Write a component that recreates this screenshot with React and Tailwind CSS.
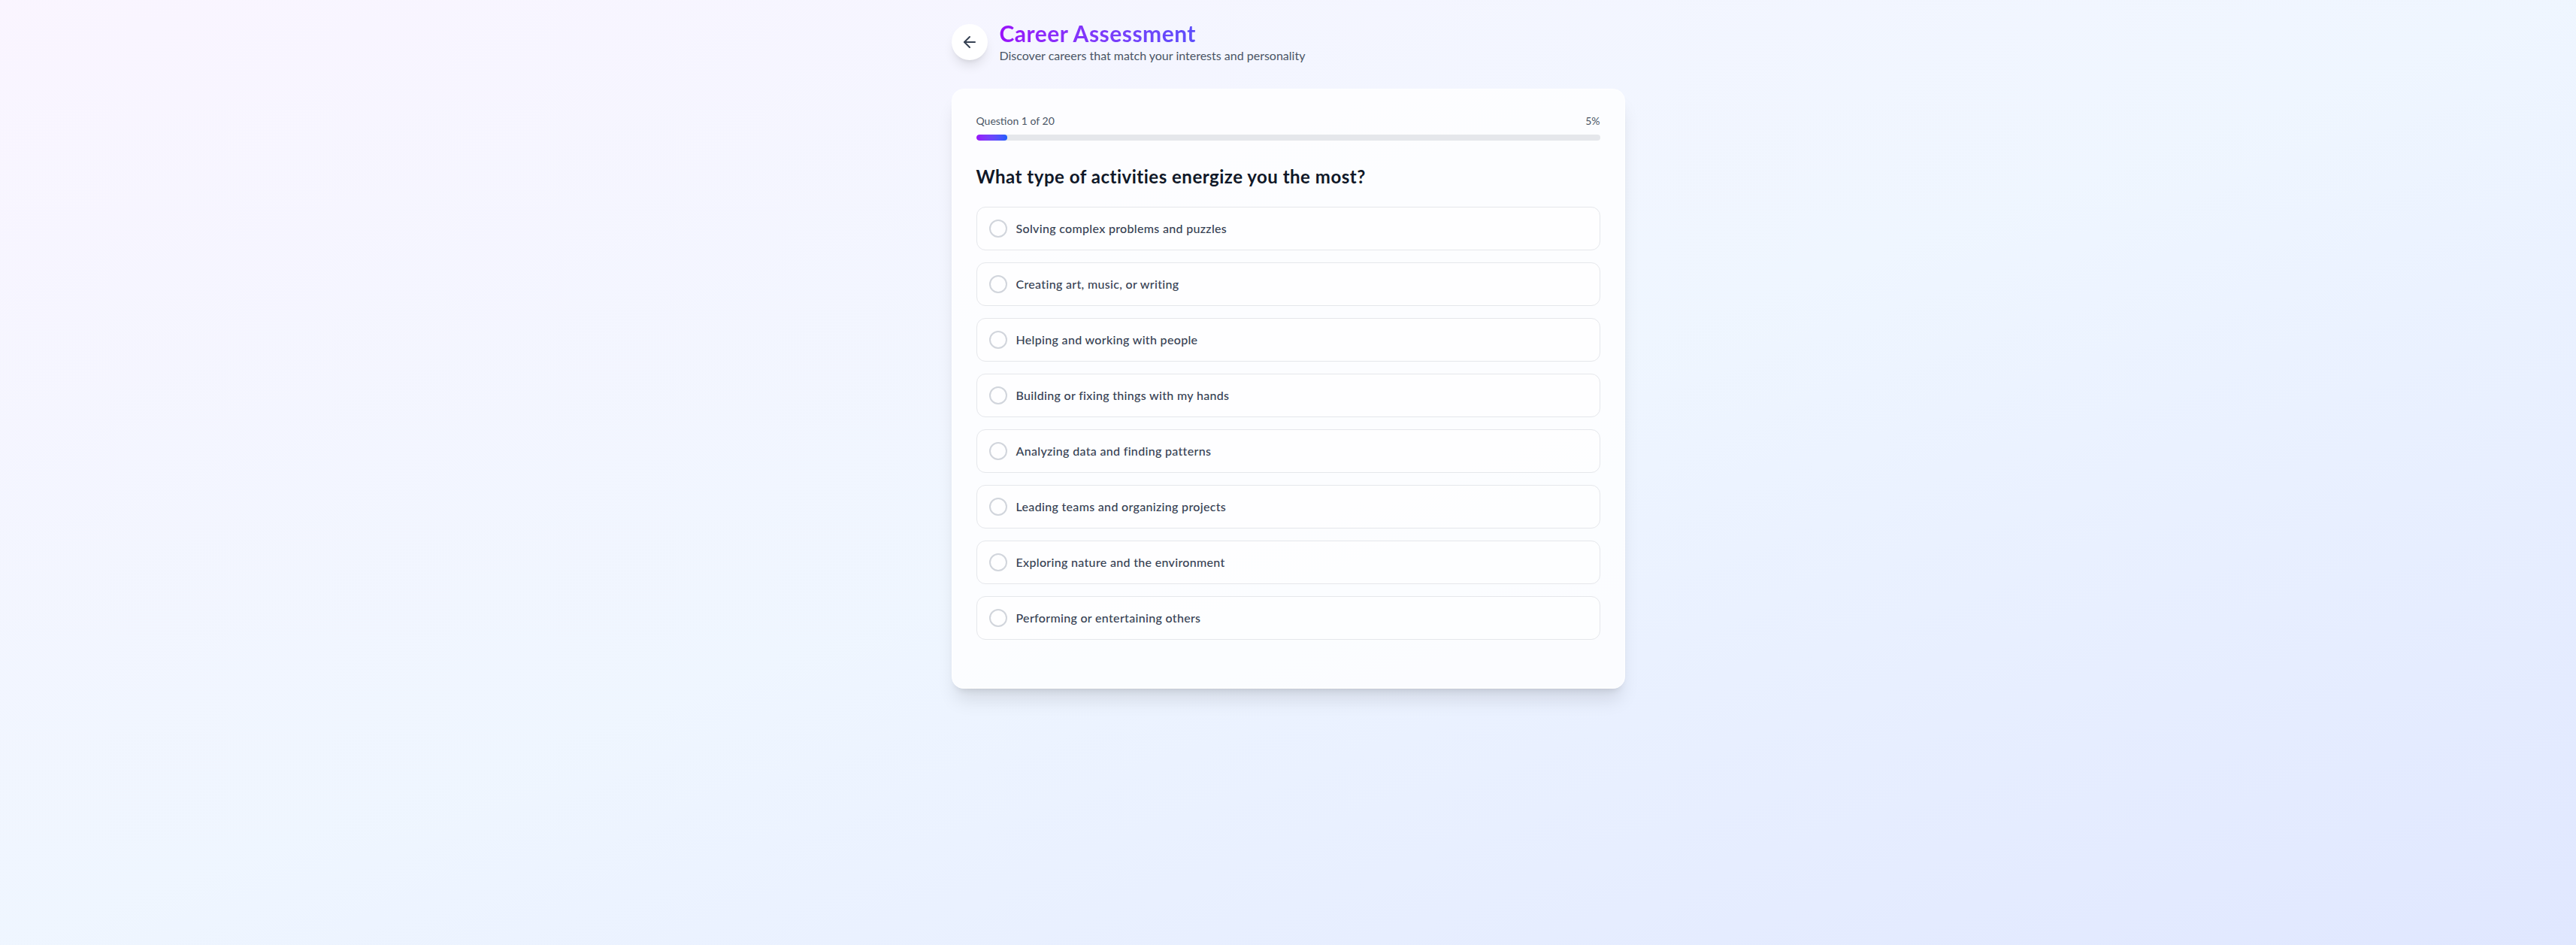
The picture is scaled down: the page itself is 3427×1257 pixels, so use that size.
import React from "react";
import { ArrowLeft } from "lucide-react";

const options = [
  "Solving complex problems and puzzles",
  "Creating art, music, or writing",
  "Helping and working with people",
  "Building or fixing things with my hands",
  "Analyzing data and finding patterns",
  "Leading teams and organizing projects",
  "Exploring nature and the environment",
  "Performing or entertaining others",
];

export default function App() {
  const progress = 5;
  return (
    <div
      className="min-h-screen bg-gradient-to-br from-purple-50 via-blue-50 to-indigo-100"
      style={{ fontFamily: "Lato, 'Noto Sans', 'Liberation Sans', sans-serif" }}
    >
      <div className="max-w-4xl mx-auto pt-[26px] pb-8">
        <div className="flex items-center gap-4 mb-8">
          <button className="w-12 h-12 rounded-full bg-white shadow-lg flex items-center justify-center text-gray-700">
            <ArrowLeft className="w-6 h-6" strokeWidth={2} />
          </button>
          <div className="flex flex-col">
            <h1 className="text-3xl font-bold tracking-[0.016em] bg-gradient-to-r from-purple-600 to-blue-600 bg-clip-text text-transparent">
              Career Assessment
            </h1>
            <p className="text-base text-gray-600">
              Discover careers that match your interests and personality
            </p>
          </div>
        </div>

        <div className="bg-white/80 border border-white rounded-2xl shadow-xl p-8">
          <div className="flex justify-between items-center mb-2 text-sm text-gray-600">
            <span>Question 1 of 20</span>
            <span>{progress}%</span>
          </div>
          <div className="w-full h-2 bg-gray-200 rounded-full mb-8 overflow-hidden">
            <div
              className="h-full rounded-full bg-gradient-to-r from-purple-600 to-blue-600"
              style={{ width: `${progress}%` }}
            />
          </div>

          <h2 className="text-2xl font-bold tracking-[0.021em] text-gray-900 mb-6">
            What type of activities energize you the most?
          </h2>

          <div className="flex flex-col gap-4 mb-8">
            {options.map((o) => (
              <button
                key={o}
                className="w-full flex items-center gap-3 p-4 rounded-xl border border-gray-200 bg-white/60 text-left"
              >
                <span className="w-6 h-6 rounded-full border-2 border-gray-300 shrink-0" />
                <span className="text-base font-medium tracking-[0.02em] text-gray-700">{o}</span>
              </button>
            ))}
          </div>
        </div>
      </div>
    </div>
  );
}
